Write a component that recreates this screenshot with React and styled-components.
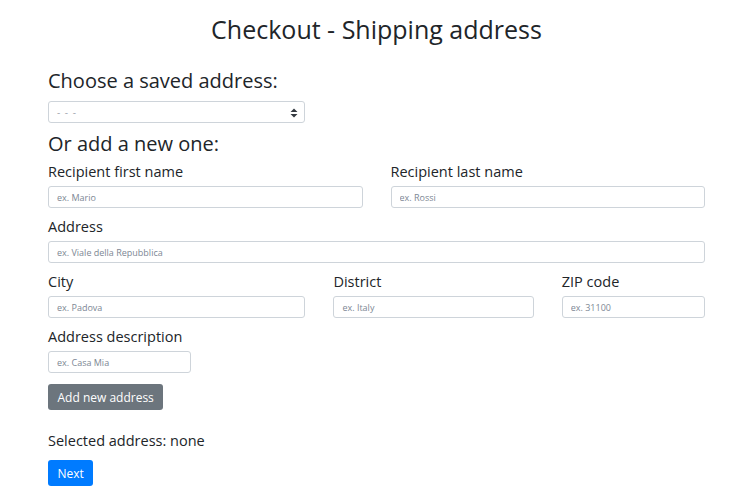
import React from "react";
import styled, { createGlobalStyle } from "styled-components";

const Global = createGlobalStyle`
body {
margin:0;
background:#fff;
color:#212529;
font-family:"Open Sans", "DejaVu Sans", sans-serif;
}
* { box-sizing:border-box; }
`

const Page = styled.div`
padding:0 35px 0 48px;
`

const Title = styled.h1`
margin:0;
padding-top:15px;
font-size:25px;
line-height:29px;
font-weight:400;
text-align:center;
`

const Heading = styled.h3`
margin:${(p) => p.$mt}px 0 0;
font-size:20px;
line-height:23px;
font-weight:400;
`

const SelectBox = styled.div`
position:relative;
width:257px;
height:22px;
margin-top:9px;
border:1px solid #ced4da;
border-radius:3px;
display:flex;
align-items:center;
padding:0 8px;
font-size:10px;
color:#a3a9b0;
letter-spacing:1px;
`

const Arrows = styled.svg`
position:absolute;
right:6px;
top:6px;
`

const Row = styled.div`
display:grid;
grid-template-columns:${(p) => p.$cols};
column-gap:28px;
`

const Group = styled.div`
margin-bottom:8px;
`

const Label = styled.label`
display:block;
font-size:14.5px;
line-height:21px;
margin-bottom:4px;
`

const Input = styled.input`
display:block;
width:100%;
height:22px;
border:1px solid #ced4da;
border-radius:3px;
padding:0 8px;
font-family:inherit;
font-size:9px;
color:#495057;
outline:none;
&::placeholder { color:#7d8794; }
`

const Button = styled.button`
display:inline-block;
height:26px;
padding:0 9.5px;
border:none;
border-radius:3px;
font-family:inherit;
font-size:12px;
font-weight:500;
color:#fff;
background:${(p) => (p.$primary ? "#007bff" : "#6c757d")};
margin-top:${(p) => p.$mt}px;
`

const Selected = styled.p`
margin:20px 0 0;
font-size:14.5px;
line-height:21px;
`

const Spacer = styled.div`
height:6px;
`

const Field = ({ label, placeholder }) => (
    <Group>
        <Label>{label}</Label>
        <Input placeholder={placeholder} />
    </Group>
);

const App = () => {
    return (
        <Page>
            <Global />
            <Title>Checkout - Shipping address</Title>
            <Heading $mt={25}>Choose a saved address:</Heading>
            <SelectBox>
                - - -
                <Arrows width="8" height="10" viewBox="0 0 8 10">
                    <path d="M4 0.5 L7.5 4 H0.5 Z M4 9.5 L7.5 6 H0.5 Z" fill="#343a40" />
                </Arrows>
            </SelectBox>
            <Heading $mt={9}>Or add a new one:</Heading>
            <Spacer />
            <Row $cols="1fr 1fr">
                <Field label="Recipient first name" placeholder="ex. Mario" />
                <Field label="Recipient last name" placeholder="ex. Rossi" />
            </Row>
            <Field label="Address" placeholder="ex. Viale della Repubblica" />
            <Row $cols="257fr 200fr 143fr">
                <Field label="City" placeholder="ex. Padova" />
                <Field label="District" placeholder="ex. Italy" />
                <Field label="ZIP code" placeholder="ex. 31100" />
            </Row>
            <Row $cols="143px">
                <Field label="Address description" placeholder="ex. Casa Mia" />
            </Row>
            <Button $mt={3}>Add new address</Button>
            <Selected>Selected address: none</Selected>
            <Button $primary $mt={9}>Next</Button>
        </Page>
    );
};

export default App;
